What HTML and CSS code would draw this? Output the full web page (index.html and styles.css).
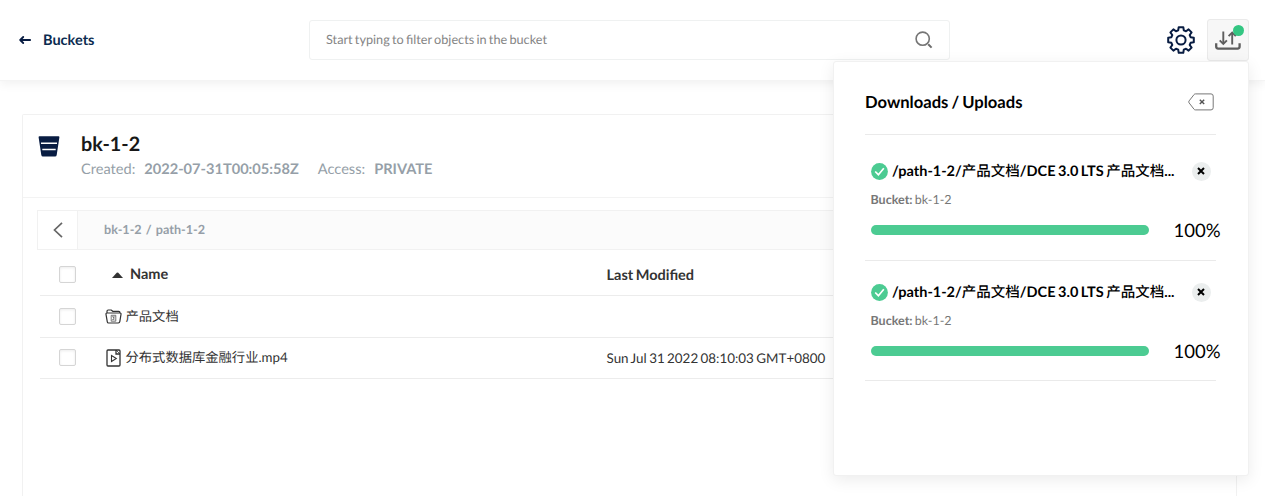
FILE: index.html
```html
<!DOCTYPE html>
<html lang="zh-CN">
<head>
<meta charset="utf-8">
<title>bk-1-2</title>
<link rel="stylesheet" href="styles.css">
</head>
<body>
<header class="topbar">
  <a class="back">
    <svg width="12" height="8" viewBox="0 0 12 8"><path d="M11.2 4H2M4.200 1 1.200 4l3 3" fill="none" stroke="#081c42" stroke-width="1.800" stroke-linecap="round" stroke-linejoin="round"/></svg>
    <span class="back-label">Buckets</span>
  </a>
  <div class="search">
    <span class="search-text">Start typing to filter objects in the bucket</span>
    <svg width="18" height="18" viewBox="0 0 18 18"><path d="M13.200 13.200 16.600 16.600" stroke="#6b6b6b" stroke-width="2"/><circle cx="7.700" cy="7.700" r="6.600" fill="none" stroke="#757575" stroke-width="1.600"/></svg>
  </div>
  <div class="actions">
    <svg class="gear" width="28" height="28" viewBox="0 0 28 28" fill="none" stroke="#081c42" stroke-width="2" stroke-linejoin="round"><path d="M11.700 1.200h4.600l.5 3.200 2.200.9 2.600-1.900 3 3-1.900 2.600.9 2.200 3.200.5v4.600l-3.200.5-.9 2.200 1.900 2.600-3 3-2.600-1.900-2.200.9-.5 3.200h-4.600l-.5-3.200-2.200-.9-2.600 1.900-3-3 1.900-2.600-.9-2.200-3.200-.5v-4.600l3.200-.5.9-2.200-1.900-2.600 3-3 2.600 1.900 2.200-.9z"/><circle cx="14" cy="14" r="4.600"/></svg>
    <div class="transfer">
      <svg width="26" height="21" viewBox="0 0 26 21" fill="none" stroke="#5e5e5e"><path d="M8.300 1.500v12M17.200 14.500V3" stroke-width="1.900"/><path d="M4.700 10.400 8.300 14l3.600-3.600M13.600 6.200l3.600-3.600 3.600 3.600" stroke-width="1.900"/><path d="M1.200 13.200v3.400q0 2 2 2h19.400q2 0 2-2v-3.400" stroke-width="2.300"/></svg>
      <span class="dot"></span>
    </div>
  </div>
</header>

<main class="card">
  <section class="bucket-head">
    <svg width="22" height="21" viewBox="0 0 22 21"><path d="M1.500.3h19q1 0 .9 1L18.700 19q-.2 1.600-1.700 1.600H5Q3.500 20.600 3.300 19L.6 1.300Q.5.3 1.500.3z" fill="#081c42"/><path d="M3 7.300h16M4.300 13.400h13.400" stroke="#fff" stroke-width="1.500"/></svg>
    <div class="bucket-info">
      <h1>bk-1-2</h1>
      <p class="meta"><span>Created:</span><b>2022-07-31T00:05:58Z</b><span class="access">Access:</span><b>PRIVATE</b></p>
    </div>
  </section>
  <div class="crumbs">
    <div class="crumb-back"><svg width="10" height="16" viewBox="0 0 10 16"><path d="M9 .8 1.500 8 9 15.200" fill="none" stroke="#666" stroke-width="1.700"/></svg></div>
    <span class="crumb-path">bk-1-2&nbsp; /&nbsp; path-1-2</span>
  </div>
  <div class="table">
    <div class="row head">
      <i class="check"></i>
      <div class="name"><svg width="11" height="6" viewBox="0 0 11 6"><path d="M0 6 4.700.8q.8-.8 1.600 0L11 6z" fill="#333"/></svg><b>Name</b></div>
      <b class="date">Last Modified</b>
    </div>
    <div class="row">
      <i class="check"></i>
      <div class="name"><svg width="17" height="15" viewBox="0 0 17 15" fill="none" stroke="#333" stroke-width="1.200"><path d="M2.300 12.800 1 5.300q-.2-1.300 1-1.300h13q1.200 0 1 1.300L14.800 12.700q-.2 1.300-1.500 1.300H3.500q-1 0-1.200-1.200M2 4V2.200Q2 1 3.200 1h3l1.600 1.300h5.800q1.400 0 1.400 1.400"/><path d="M6.200 6.300h4.600v5.900H6.200zM7.200 7.700h1.300v1.300h1.300M7.200 10.700h1.300v-1.300M9.800 7.300v.8M9.600 10.800h.7" stroke-width=".8" stroke="#555"/></svg><span class="zh">产品文档</span></div>
    </div>
    <div class="row">
      <i class="check"></i>
      <div class="name"><svg width="17" height="18" viewBox="0 0 17 18" fill="none" stroke="#333" stroke-width="1.300"><path d="M3 1h11q1 0 1 1v14q0 1-1 1H3q-1 0-1-1V2q0-1 1-1zM11 1v4h4"/><path d="M11 1l4 4" stroke-width=".8"/><path d="M6.500 6.500v6L11.300 9.500z" stroke-width="1.100"/></svg><span class="zh">分布式数据库金融行业.mp4</span></div>
      <span class="date">Sun Jul 31 2022 08:10:03 GMT+0800</span>
    </div>
  </div>
</main>

<aside class="panel">
  <div class="panel-head">
    <h2>Downloads / Uploads</h2>
    <svg width="26" height="18" viewBox="0 0 26 18" fill="none" stroke="#777"><path d="M7.300.9H23q2.200 0 2.200 2.200v11.600q0 2.200-2.200 2.200H7.300q-.7 0-1.200-.6L1.100 9.900q-.8-1 0-2L6.100 1.500q.5-.6 1.200-.6z"/><path d="M11.800 6.700 16.200 11.100M16.200 6.700 11.800 11.100" stroke="#555" stroke-width="1.400"/></svg>
  </div>
  <div class="task">
    <div class="task-title">
      <svg width="17" height="17" viewBox="0 0 17 17"><circle cx="8.500" cy="8.500" r="8.400" fill="#4ccb92"/><path d="M4.200 8.500 7.400 11.700 12.800 5.300" fill="none" stroke="#fff" stroke-width="1.700"/></svg>
      <b>/path-1-2/<span class="cjk">产品文档</span>/DCE 3.0 LTS <span class="cjk">产品文档</span>...</b>
      <span class="close"><svg width="8" height="8" viewBox="0 0 8 8"><path d="M1 1 7 7M7 1 1 7" stroke="#000" stroke-width="2"/></svg></span>
    </div>
    <p class="task-bucket"><b>Bucket:</b> bk-1-2</p>
    <div class="progress"><i class="bar"></i><span>100%</span></div>
  </div>
  <div class="task">
    <div class="task-title">
      <svg width="17" height="17" viewBox="0 0 17 17"><circle cx="8.500" cy="8.500" r="8.400" fill="#4ccb92"/><path d="M4.200 8.500 7.400 11.700 12.800 5.300" fill="none" stroke="#fff" stroke-width="1.700"/></svg>
      <b>/path-1-2/<span class="cjk">产品文档</span>/DCE 3.0 LTS <span class="cjk">产品文档</span>...</b>
      <span class="close"><svg width="8" height="8" viewBox="0 0 8 8"><path d="M1 1 7 7M7 1 1 7" stroke="#000" stroke-width="2"/></svg></span>
    </div>
    <p class="task-bucket"><b>Bucket:</b> bk-1-2</p>
    <div class="progress"><i class="bar"></i><span>100%</span></div>
  </div>
</aside>
</body>
</html>
```
FILE: styles.css
```css
* { box-sizing: border-box; margin: 0; padding: 0; }
body {
  position: relative;
  height: 501px;
  overflow: hidden;
  background: #fff;
  font-family: Lato, "Noto Sans CJK SC", sans-serif;
  font-size: 14px;
  color: #333;
  white-space: nowrap;
  word-spacing: -1px;
  text-rendering: geometricPrecision;
}
svg { display: block; flex: none; }

.topbar {
  height: 81px;
  display: flex;
  align-items: center;
  padding: 0 16px 0 19px;
  border-bottom: 1px solid #f4f4f4;
  box-shadow: 0 3px 10px rgba(0, 0, 0, .06);
}
.back { width: 290px; display: flex; align-items: center; gap: 12px; }
.back-label { margin-top: 2px; font-size: 14.500px; font-weight: 700; line-height: 20px; color: #0b2b50; }
.search {
  width: 641px;
  height: 40px;
  display: flex;
  align-items: center;
  justify-content: space-between;
  padding: 0 16px;
  border: 1px solid #eff1f1;
  border-radius: 3px;
}
.search-text { margin-top: -2px; font-size: 12.700px; color: #858585; }
.actions { margin-left: auto; display: flex; align-items: center; gap: 12px; }
.transfer {
  position: relative;
  width: 42px;
  height: 42px;
  display: grid;
  place-items: center;
  background: #f7f7f7;
  border: 1px solid #eaeaea;
  border-radius: 3px;
}
.dot {
  position: absolute;
  top: 5px;
  right: 4px;
  width: 11px;
  height: 11px;
  border-radius: 50%;
  background: #33c682;
}

.card {
  width: 1215px;
  height: 382px;
  margin: 33px 0 0 22px;
  border: 1px solid #f1f1f1;
  border-bottom: 0;
  border-radius: 2px 2px 0 0;
}
.bucket-head {
  height: 83px;
  display: flex;
  gap: 21px;
  padding: 21px 15px 0;
  border-bottom: 1px solid #f3f3f3;
}
.bucket-info { margin-top: -5px; }
h1 { font-size: 19.800px; line-height: 26px; font-weight: 700; color: #181818; }
.meta { display: flex; gap: 9px; font-size: 14.600px; line-height: 26px; color: #969fa8; }
.access { margin-left: 10px; }
.crumbs {
  height: 40px;
  margin: 12px 14px 0;
  display: flex;
  align-items: center;
  border: 1px solid #f1f1f1;
  background: #fbfbfb;
}
.crumb-back {
  width: 40px;
  height: 38px;
  display: grid;
  place-items: center;
  background: #fff;
  border-right: 1px solid #f1f1f1;
}
.crumb-path { margin: -2px 0 0 26px; font-size: 12.600px; font-weight: 700; color: #969fa8; }
.table { margin: 0 16px 0 17px; }
.row {
  height: 41.500px;
  display: grid;
  grid-template-columns: 64px 502.500px 1fr;
  align-items: center;
  border-bottom: 1px solid #ececec;
}
.row.head { height: 46px; padding-top: 4px; }
.check {
  width: 17px;
  height: 17px;
  margin-left: 19px;
  border: 1px solid #d5d5d5;
  border-radius: 2px;
  background: #fff;
  box-shadow: inset 0 1px 3px rgba(0, 0, 0, .08);
}
.name { display: flex; align-items: center; gap: 4px; padding-left: .5px; font-size: 13.300px; line-height: 20px; }
.name .zh { margin-top: -1px; }
.head .name { padding-left: 8px; gap: 7px; }
.date { font-size: 13.400px; }
.head b { margin-top: 1px; font-size: 14.500px; }

.panel {
  position: absolute;
  left: 833px;
  top: 61px;
  width: 416px;
  height: 415px;
  padding: 0 32px 0 31px;
  background: #fff;
  border: 1px solid #f1f1f1;
  border-radius: 3px;
  box-shadow: 0 4px 16px rgba(0, 0, 0, .08);
  color: #000;
}
.panel-head {
  height: 73px;
  display: flex;
  align-items: center;
  justify-content: space-between;
  padding: 7px 2px 0 0;
  border-bottom: 1px solid #eaeaea;
}
h2 { font-size: 16.600px; line-height: 22px; }
.task { height: 126px; border-bottom: 1px solid #eaeaea; padding: 25px 0 0 5.500px; }
.task + .task { height: 120px; padding-top: 20px; }
.task-title { height: 22px; display: flex; align-items: center; gap: 4.500px; font-size: 14.500px; }
.task-title b { line-height: 20px; margin-top: 1px; }
.cjk { font-weight: 500; }
.close {
  width: 19px;
  height: 19px;
  margin-left: auto;
  margin-right: 5.500px;
  display: grid;
  place-items: center;
  border-radius: 50%;
  background: #ebeeee;
}
.task-bucket { margin-top: 8px; font-size: 12.500px; line-height: 20px; color: #777; }
.progress { height: 24px; margin-top: 8px; display: flex; align-items: center; font-size: 18.500px; }
.bar { flex: none; width: 278px; height: 10px; margin-right: 25px; border-radius: 5px; background: #4ccb92; }
```
